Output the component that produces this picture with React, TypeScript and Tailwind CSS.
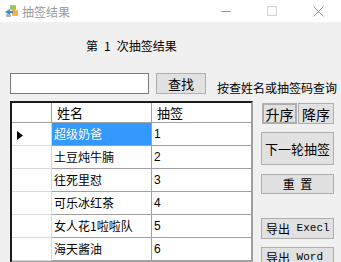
import React from "react";

const rows: [string, string][] = [
  ["超级奶爸", "1"],
  ["土豆炖牛腩", "2"],
  ["往死里怼", "3"],
  ["可乐冰红茶", "4"],
  ["女人花1啦啦队", "5"],
  ["海天酱油", "6"],
];

function Btn({
  children,
  className = "",
}: {
  children: React.ReactNode;
  className?: string;
}) {
  return (
    <div
      className={
        "flex items-center justify-center bg-[#e1e1e1] border border-[#adadad] text-black " +
        className
      }
    >
      {children}
    </div>
  );
}

export default function App() {
  return (
    <div className="w-[341px] h-[262px] overflow-hidden bg-[#f0f0f0] flex flex-col font-['Noto_Sans_CJK_SC',sans-serif] text-black">
      {/* Title bar */}
      <div className="h-[22px] bg-white flex items-center shrink-0">
        <div className="w-[22px] h-[22px] flex items-center justify-center">
          <svg width="15" height="14" viewBox="0 0 15 14">
            <rect x="6" y="1" width="6" height="5" rx="1" fill="#9cc65a" />
            <rect x="8" y="6" width="6" height="6" rx="1" fill="#f2b33d" />
            <path d="M1 8 L6 5 L6 7 L9 7 L9 9 L6 9 L6 11 Z" fill="#2f8de4" />
            <rect x="2" y="10" width="5" height="3" rx="1" fill="#b0b0b0" />
          </svg>
        </div>
        <div className="text-[12px] leading-none text-[#9a9a9a] mt-[1px]">抽签结果</div>
        <div className="flex-1" />
        <div className="w-[46px] h-[22px] flex items-center justify-center">
          <svg width="10" height="10" viewBox="0 0 10 10">
            <line x1="0" y1="5.5" x2="10" y2="5.5" stroke="#9a9a9a" strokeWidth="1" />
          </svg>
        </div>
        <div className="w-[46px] h-[22px] flex items-center justify-center">
          <svg width="10" height="10" viewBox="0 0 10 10">
            <rect x="0.5" y="0.5" width="9" height="9" fill="none" stroke="#d4d4d4" strokeWidth="1" />
          </svg>
        </div>
        <div className="w-[46px] h-[22px] flex items-center justify-center">
          <svg width="11" height="11" viewBox="0 0 11 11">
            <line x1="0.5" y1="0.5" x2="10.5" y2="10.5" stroke="#9a9a9a" strokeWidth="1" />
            <line x1="10.5" y1="0.5" x2="0.5" y2="10.5" stroke="#9a9a9a" strokeWidth="1" />
          </svg>
        </div>
      </div>

      {/* Heading */}
      <div className="mt-[16px] h-[16px] pl-[86px] text-[12px] leading-[16px] flex items-center whitespace-nowrap">
        <span>第</span>
        <span className="inline-block w-[6px]" />
        <span>1</span>
        <span className="inline-block w-[6px]" />
        <span>次抽签结果</span>
      </div>

      {/* Search row */}
      <div className="mt-[19px] pl-[10px] flex items-start">
        <div className="w-[139px] h-[21px] bg-white border border-[#7a7a7a]" />
        <Btn className="ml-[7px] w-[50px] h-[21px] text-[13px] leading-none">查找</Btn>
        <div className="ml-[11px] mt-[8px] text-[12px] leading-[14px] whitespace-nowrap">
          按查姓名或抽签码查询
        </div>
      </div>

      {/* Main */}
      <div className="mt-[6px] pl-[10px] flex items-start">
        {/* Grid */}
        <div className="w-[243px] h-[162px] shrink-0 border-2 border-t-[#1a1a1a] border-l-[#1a1a1a] border-r-[#a0a0a0] border-b-[#a0a0a0] bg-white flex flex-col">
          <div className="h-[20px] flex border-b border-[#a0a0a0] text-[13px] leading-none">
            <div className="w-[40px] border-r border-[#a0a0a0]" />
            <div className="w-[100px] border-r border-[#a0a0a0] flex items-center pl-[5px]">姓名</div>
            <div className="flex-1 flex items-center pl-[5px]">抽签</div>
          </div>
          {rows.map(([name, n], i) => (
            <div key={i} className="h-[23px] flex text-[12px] leading-none">
              <div className="w-[40px] border-r border-b border-[#d9d9d9] flex items-center pl-[5px]">
                {i === 0 && (
                  <svg width="6" height="9" viewBox="0 0 6 9" className="mt-[3px]">
                    <polygon points="0,0 6,4.5 0,9" fill="#000" />
                  </svg>
                )}
              </div>
              <div className="w-[100px] border-r border-b border-[#a0a0a0] flex">
                <div
                  className={
                    "flex-1 flex items-center pl-[2px] " +
                    (i === 0 ? "bg-[#3399ff] text-white" : "")
                  }
                >
                  {name}
                </div>
              </div>
              <div className="flex-1 border-b border-[#a0a0a0] flex items-center pl-[2px] font-['Liberation_Sans',sans-serif]">
                {n}
              </div>
            </div>
          ))}
        </div>

        {/* Buttons */}
        <div className="ml-[8px] w-[73px] flex flex-col mt-[2px] shrink-0">
          <div className="flex pl-[1px] gap-[1px]">
            <Btn className="w-[35px] h-[21px] border-2 border-[#0078d7] text-[14px] leading-none">升序</Btn>
            <Btn className="w-[36px] h-[21px] text-[14px] leading-none">降序</Btn>
          </div>
          <Btn className="mt-[8px] h-[33px] text-[13px] leading-none">下一轮抽签</Btn>
          <Btn className="mt-[9px] h-[20px] text-[12px] leading-none whitespace-pre">重  置</Btn>
          <Btn className="mt-[24px] h-[21px] !justify-start pl-[4px] text-[12px] leading-none whitespace-pre">
            导出<span className="font-['Liberation_Mono',monospace] text-[11px]"> Execl</span>
          </Btn>
          <Btn className="mt-[8px] h-[21px] !justify-start pl-[4px] text-[12px] leading-none whitespace-pre">
            导出<span className="font-['Liberation_Mono',monospace] text-[11px]"> Word</span>
          </Btn>
        </div>
      </div>
    </div>
  );
}
